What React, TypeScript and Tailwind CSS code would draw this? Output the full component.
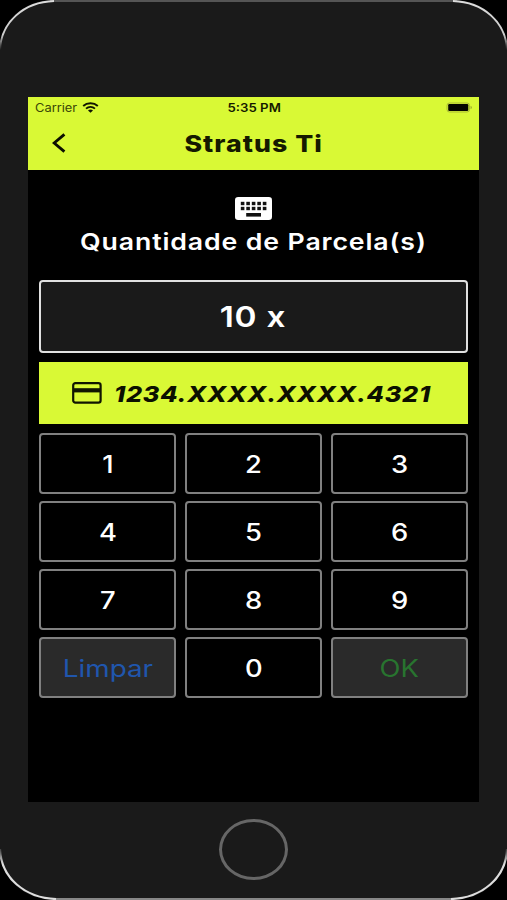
import React from "react";
import { clsx } from "clsx";

interface TextProps {
  className?: string;
  children: React.ReactNode;
}

// Wide label: the glyphs are stretched sideways around their centre
const Wide: React.FC<TextProps> = ({ className, children }) => (
  <span className={clsx("inline-block whitespace-nowrap leading-none", className)}>{children}</span>
);

const WifiIcon = () => (
  <svg className="h-[11px] w-[17px]" viewBox="0 0 17 11" fill="none" stroke="#101500">
    <path d="M1.2 3.9C5.2 .4 11.8 .4 15.8 3.9" strokeWidth="2" />
    <path d="M4 6.6c2.6-2.2 6.4-2.2 9 0" strokeWidth="1.8" />
    <path d="M8.5 10.8 6 8.5c1.4-1.2 3.6-1.2 5 0z" fill="#101500" stroke="none" />
  </svg>
);

const BatteryIcon = () => (
  <svg className="h-[11px] w-[27px]" viewBox="0 0 27 11">
    <rect x="1" y="1" width="22.5" height="9" rx="2.5" fill="none" stroke="#a9b934" strokeWidth="1" />
    <rect x="2.2" y="2" width="20.1" height="7" rx="1.2" fill="#050600" />
    <path d="M24.6 3.8c1.6.5 1.6 2.9 0 3.4z" fill="#8f9d2c" />
  </svg>
);

const BackIcon = () => (
  <svg className="h-[20px] w-[14px]" viewBox="0 0 14 20" fill="none" stroke="#0c1000" strokeWidth="2.9">
    <path d="M12.4 1.4 2.2 10l10.2 8.6" />
  </svg>
);

const columns = [0, 1, 2, 3, 4];

const KeyboardIcon = () => (
  <svg className="h-[23px] w-[37px]" viewBox="0 0 37 23">
    <rect width="37" height="23" rx="3.2" fill="#fff" />
    {columns.map((c) => (
      <React.Fragment key={c}>
        <rect x={5.8 + c * 5.5} y="4.8" width="3.6" height="3.4" fill="#111" />
        <rect x={5.8 + c * 5.5} y="9.8" width="3.6" height="3.4" fill="#111" />
      </React.Fragment>
    ))}
    <rect x="11.2" y="16" width="14.8" height="3.6" fill="#111" />
  </svg>
);

const CardIcon = () => (
  <svg className="h-[22px] w-[30px]" viewBox="0 0 30 22">
    <rect x="1.2" y="1.2" width="27.4" height="19.4" rx="2.2" fill="none" stroke="#101500" strokeWidth="2.2" />
    <rect x="1" y="6.2" width="28" height="4.2" fill="#101500" />
  </svg>
);

const keys = ["1", "2", "3", "4", "5", "6", "7", "8", "9", "Limpar", "0", "OK"];

const KeyButton: React.FC<{ label: string }> = ({ label }) => {
  const isAction = label === "Limpar" || label === "OK";
  return (
    <button
      className={clsx(
        "flex items-center justify-center rounded-[4px] border-2 border-[#808080] pt-[3px] text-[24px]",
        isAction ? "bg-[#2a2a2a] font-normal" : "bg-black font-medium text-white",
        label === "Limpar" && "text-[#2056ad]",
        label === "OK" && "text-[#28742f]"
      )}
    >
      <Wide className={label === "Limpar" ? "scale-x-[1.16]" : "scale-x-[1.14]"}>{label}</Wide>
    </button>
  );
};

const PhoneEdge = () => (
  <svg className="pointer-events-none absolute inset-0 h-[900px] w-[507px]" viewBox="0 0 507 900" fill="none">
    <defs>
      <linearGradient id="edge-top" x1="0" x2="0" y1="0" y2="50" gradientUnits="userSpaceOnUse">
        <stop offset="0" stopColor="#ddd" />
        <stop offset=".7" stopColor="#ccc" />
        <stop offset="1" stopColor="#1a1a1a" />
      </linearGradient>
      <linearGradient id="edge-bottom" x1="0" x2="0" y1="848" y2="900" gradientUnits="userSpaceOnUse">
        <stop offset="0" stopColor="#333" />
        <stop offset=".3" stopColor="#ddd" />
        <stop offset="1" stopColor="#ddd" />
      </linearGradient>
    </defs>
    <path d="M0 0h52C22 1 0 22 0 50zM507 0h-52c30 1 52 22 52 50zM0 900h56C24 900 0 879 0 849zM507 900h-56c32 0 56-21 56-51z" fill="#000" />
    <path d="M50 1h407" stroke="#555" strokeWidth="2" />
    <path d="M54 899h399" stroke="#888" strokeWidth="2" />
    <path d="M0 50C1 22 24 2 54 1M507 50C506 22 483 2 453 1" stroke="url(#edge-top)" strokeWidth="2" />
    <path d="M0 849c1 29 25 49 56 50M507 849c-1 29-25 49-56 50" stroke="url(#edge-bottom)" strokeWidth="2.2" />
  </svg>
);

const App: React.FC = () => (
  <div className="relative flex h-[900px] w-[507px] flex-col items-center overflow-hidden bg-[#1a1a1a] pt-[97px] font-['Inter',sans-serif]">
    <main className="flex h-[705px] w-[451px] shrink-0 flex-col bg-black">
      <header className="h-[73px] shrink-0 bg-[#d9f935] text-[#151a00]">
        <div className="grid h-[20px] grid-cols-3 items-center pr-[6px] pl-[7px] text-[11.5px]">
          <div className="flex items-center gap-[5px]">
            <div className="w-[42px] pt-[3px] text-[#3c4708]">
              <Wide className="origin-left scale-x-[1.12]">Carrier</Wide>
            </div>
            <WifiIcon />
          </div>
          <div className="pt-[3px] text-center font-semibold">
            <Wide className="scale-x-[1.15]">5:35 PM</Wide>
          </div>
          <div className="flex justify-end">
            <BatteryIcon />
          </div>
        </div>
        <div className="grid h-[53px] grid-cols-[60px_1fr_60px] items-center">
          <button className="pb-px pl-[24px]" aria-label="Voltar">
            <BackIcon />
          </button>
          <h1 className="pt-[2px] text-center text-[23px] font-extrabold">
            <Wide className="scale-x-[1.16] tracking-[0.9px]">Stratus Ti</Wide>
          </h1>
        </div>
      </header>

      <section className="flex h-[110px] shrink-0 flex-col items-center pt-[27px]">
        <KeyboardIcon />
        <h2 className="mt-[11px] text-[23px] leading-none font-semibold text-white">
          <Wide className="scale-x-[1.16] tracking-[0.75px]">Quantidade de Parcela(s)</Wide>
        </h2>
      </section>

      <div className="mx-[11px] flex h-[73px] shrink-0 items-center justify-center rounded-[4px] border-2 border-[#e0e0e0] bg-[#1a1a1a] text-[29px] font-semibold text-white">
        <Wide className="-ml-[2px] scale-x-[1.15] tracking-[0.7px]">10 x</Wide>
      </div>

      <div className="mx-[11px] mt-[9px] flex h-[62px] shrink-0 items-center bg-[#d9f935] pl-[33px] text-[#0c1000]">
        <CardIcon />
        <div className="ml-[12px] pt-[2px] text-[22px] font-extrabold italic">
          <Wide className="origin-left scale-x-[1.15] tracking-[0.65px]">1234.XXXX.XXXX.4321</Wide>
        </div>
      </div>

      <div className="mx-[11px] mt-[9px] grid auto-rows-[61px] grid-cols-3 gap-x-[9px] gap-y-[7px]">
        {keys.map((k) => (
          <KeyButton key={k} label={k} />
        ))}
      </div>
    </main>

    <button
      className="mt-[17px] h-[61px] w-[69px] shrink-0 rounded-[50%] border-[3px] border-[#666]"
      aria-label="Home"
    />
    <PhoneEdge />
  </div>
);

export default App;
